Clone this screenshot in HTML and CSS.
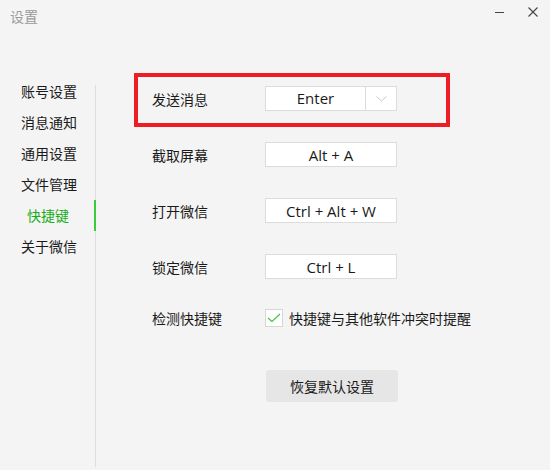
FILE: index.html
```html
<!DOCTYPE html>
<html lang="zh-CN">
<head>
    <meta charset="UTF-8">
    <title>设置</title>
    <link rel="stylesheet" href="styles.css">
</head>
<body>
    <div class="titlebar">
        <span class="title">设置</span>
        <div class="win-buttons">
            <span class="win-min"></span>
            <svg class="win-close" width="10" height="10" viewBox="0 0 10 10">
                <path d="M0.5 0.5 L9.5 9.5 M9.5 0.5 L0.5 9.5" stroke="#444" stroke-width="1.1" fill="none"/>
            </svg>
        </div>
    </div>

    <div class="main">
        <ul class="sidebar">
            <li>账号设置</li>
            <li>消息通知</li>
            <li>通用设置</li>
            <li>文件管理</li>
            <li class="active">快捷键</li>
            <li>关于微信</li>
        </ul>

        <div class="content">
            <div class="highlight">
                <div class="row">
                    <span class="label">发送消息</span>
                    <div class="keybox select">
                        <span class="select-value">Enter</span>
                        <span class="select-arrow">
                            <svg width="11" height="6" viewBox="0 0 11 6">
                                <path d="M0.5 0.5 L5.5 5 L10.5 0.5" stroke="#c8c8c8" stroke-width="1" fill="none"/>
                            </svg>
                        </span>
                    </div>
                </div>
            </div>
            <div class="row first">
                <span class="label">截取屏幕</span>
                <div class="keybox">Alt + A</div>
            </div>
            <div class="row">
                <span class="label">打开微信</span>
                <div class="keybox">Ctrl + Alt + W</div>
            </div>
            <div class="row">
                <span class="label">锁定微信</span>
                <div class="keybox">Ctrl + L</div>
            </div>
            <div class="row check-row">
                <span class="label">检测快捷键</span>
                <span class="checkbox">
                    <svg width="14" height="10" viewBox="0 0 14 10">
                        <path d="M1 5 L5 8.5 L13 1" stroke="#3fc53f" stroke-width="1.2" fill="none"/>
                    </svg>
                </span>
                <span class="check-text">快捷键与其他软件冲突时提醒</span>
            </div>
            <button class="reset-btn">恢复默认设置</button>
        </div>
    </div>
</body>
</html>
```

FILE: styles.css
```css
body {
    margin: 0;
    width: 550px;
    height: 470px;
    overflow: hidden;
    background: #f4f4f4;
    font-family: "Noto Sans CJK SC", "Noto Sans", sans-serif;
    font-size: 14px;
    color: #1a1a1a;
}
.titlebar {
    height: 73px;
    display: flex;
    justify-content: space-between;
    align-items: flex-start;
}
.title {
    margin: 6px 0 0 10px;
    font-size: 14px;
    color: #9a9a9a;
}
.win-buttons {
    display: flex;
    align-items: center;
    gap: 24px;
    margin: 7px 12px 0 0;
}
.win-min {
    width: 9px;
    height: 1px;
    margin-top: 1px;
    background: #444;
}
.main {
    display: flex;
}
.sidebar {
    list-style: none;
    margin: 0;
    padding: 3px 0 0 0;
    width: 96px;
    height: 394px;
    box-sizing: border-box;
    /* thin divider that begins a bit below the first item */
    background: linear-gradient(#dedede, #dedede) 95px 12px / 1px 100% no-repeat;
}
.sidebar li {
    height: 31px;
    line-height: 31px;
    padding-left: 2px;
    text-align: center;
    color: #1a1a1a;
}
.sidebar li.active {
    color: #1aad19;
    border-right: 2px solid #3ccb3c;
}
.content {
    padding-left: 38px;
}
.highlight {
    width: 316px;
    height: 54px;
    box-sizing: border-box;
    border: 4px solid #ee1c25;
    padding: 9px 0 0 14px;
}
.row {
    display: flex;
    align-items: center;
    height: 25px;
    margin-top: 31px;
    padding-left: 18px;
}
.highlight .row {
    margin-top: 0;
    padding-left: 0;
}
.row.first {
    margin-top: 15px;
}
.label {
    width: 113px;
    flex-shrink: 0;
}
.keybox {
    width: 132px;
    height: 25px;
    box-sizing: border-box;
    background: #fff;
    border: 1px solid #dcdcdc;
    display: flex;
    align-items: center;
    justify-content: center;
    font-family: "Open Sans", "Noto Sans", sans-serif;
    font-size: 15px;
    color: #1a1a1a;
}
.select {
    justify-content: flex-start;
}
.select-value {
    flex: 1;
    text-align: center;
    border-right: 1px solid #dcdcdc;
    height: 23px;
    line-height: 23px;
}
.select-arrow {
    width: 30px;
    display: flex;
    justify-content: center;
    align-items: center;
}
.check-row {
    margin-top: 26px;
}
.checkbox {
    width: 18px;
    height: 18px;
    box-sizing: border-box;
    background: #fff;
    border: 1px solid #d6d6d6;
    display: flex;
    align-items: center;
    justify-content: center;
}
.check-text {
    margin-left: 6px;
}
.reset-btn {
    display: block;
    margin: 40px 0 0 132px;
    width: 132px;
    height: 32px;
    border: none;
    border-radius: 3px;
    background: #e6e6e6;
    font-family: "Noto Sans CJK SC", sans-serif;
    font-size: 14px;
    color: #1a1a1a;
}
```
